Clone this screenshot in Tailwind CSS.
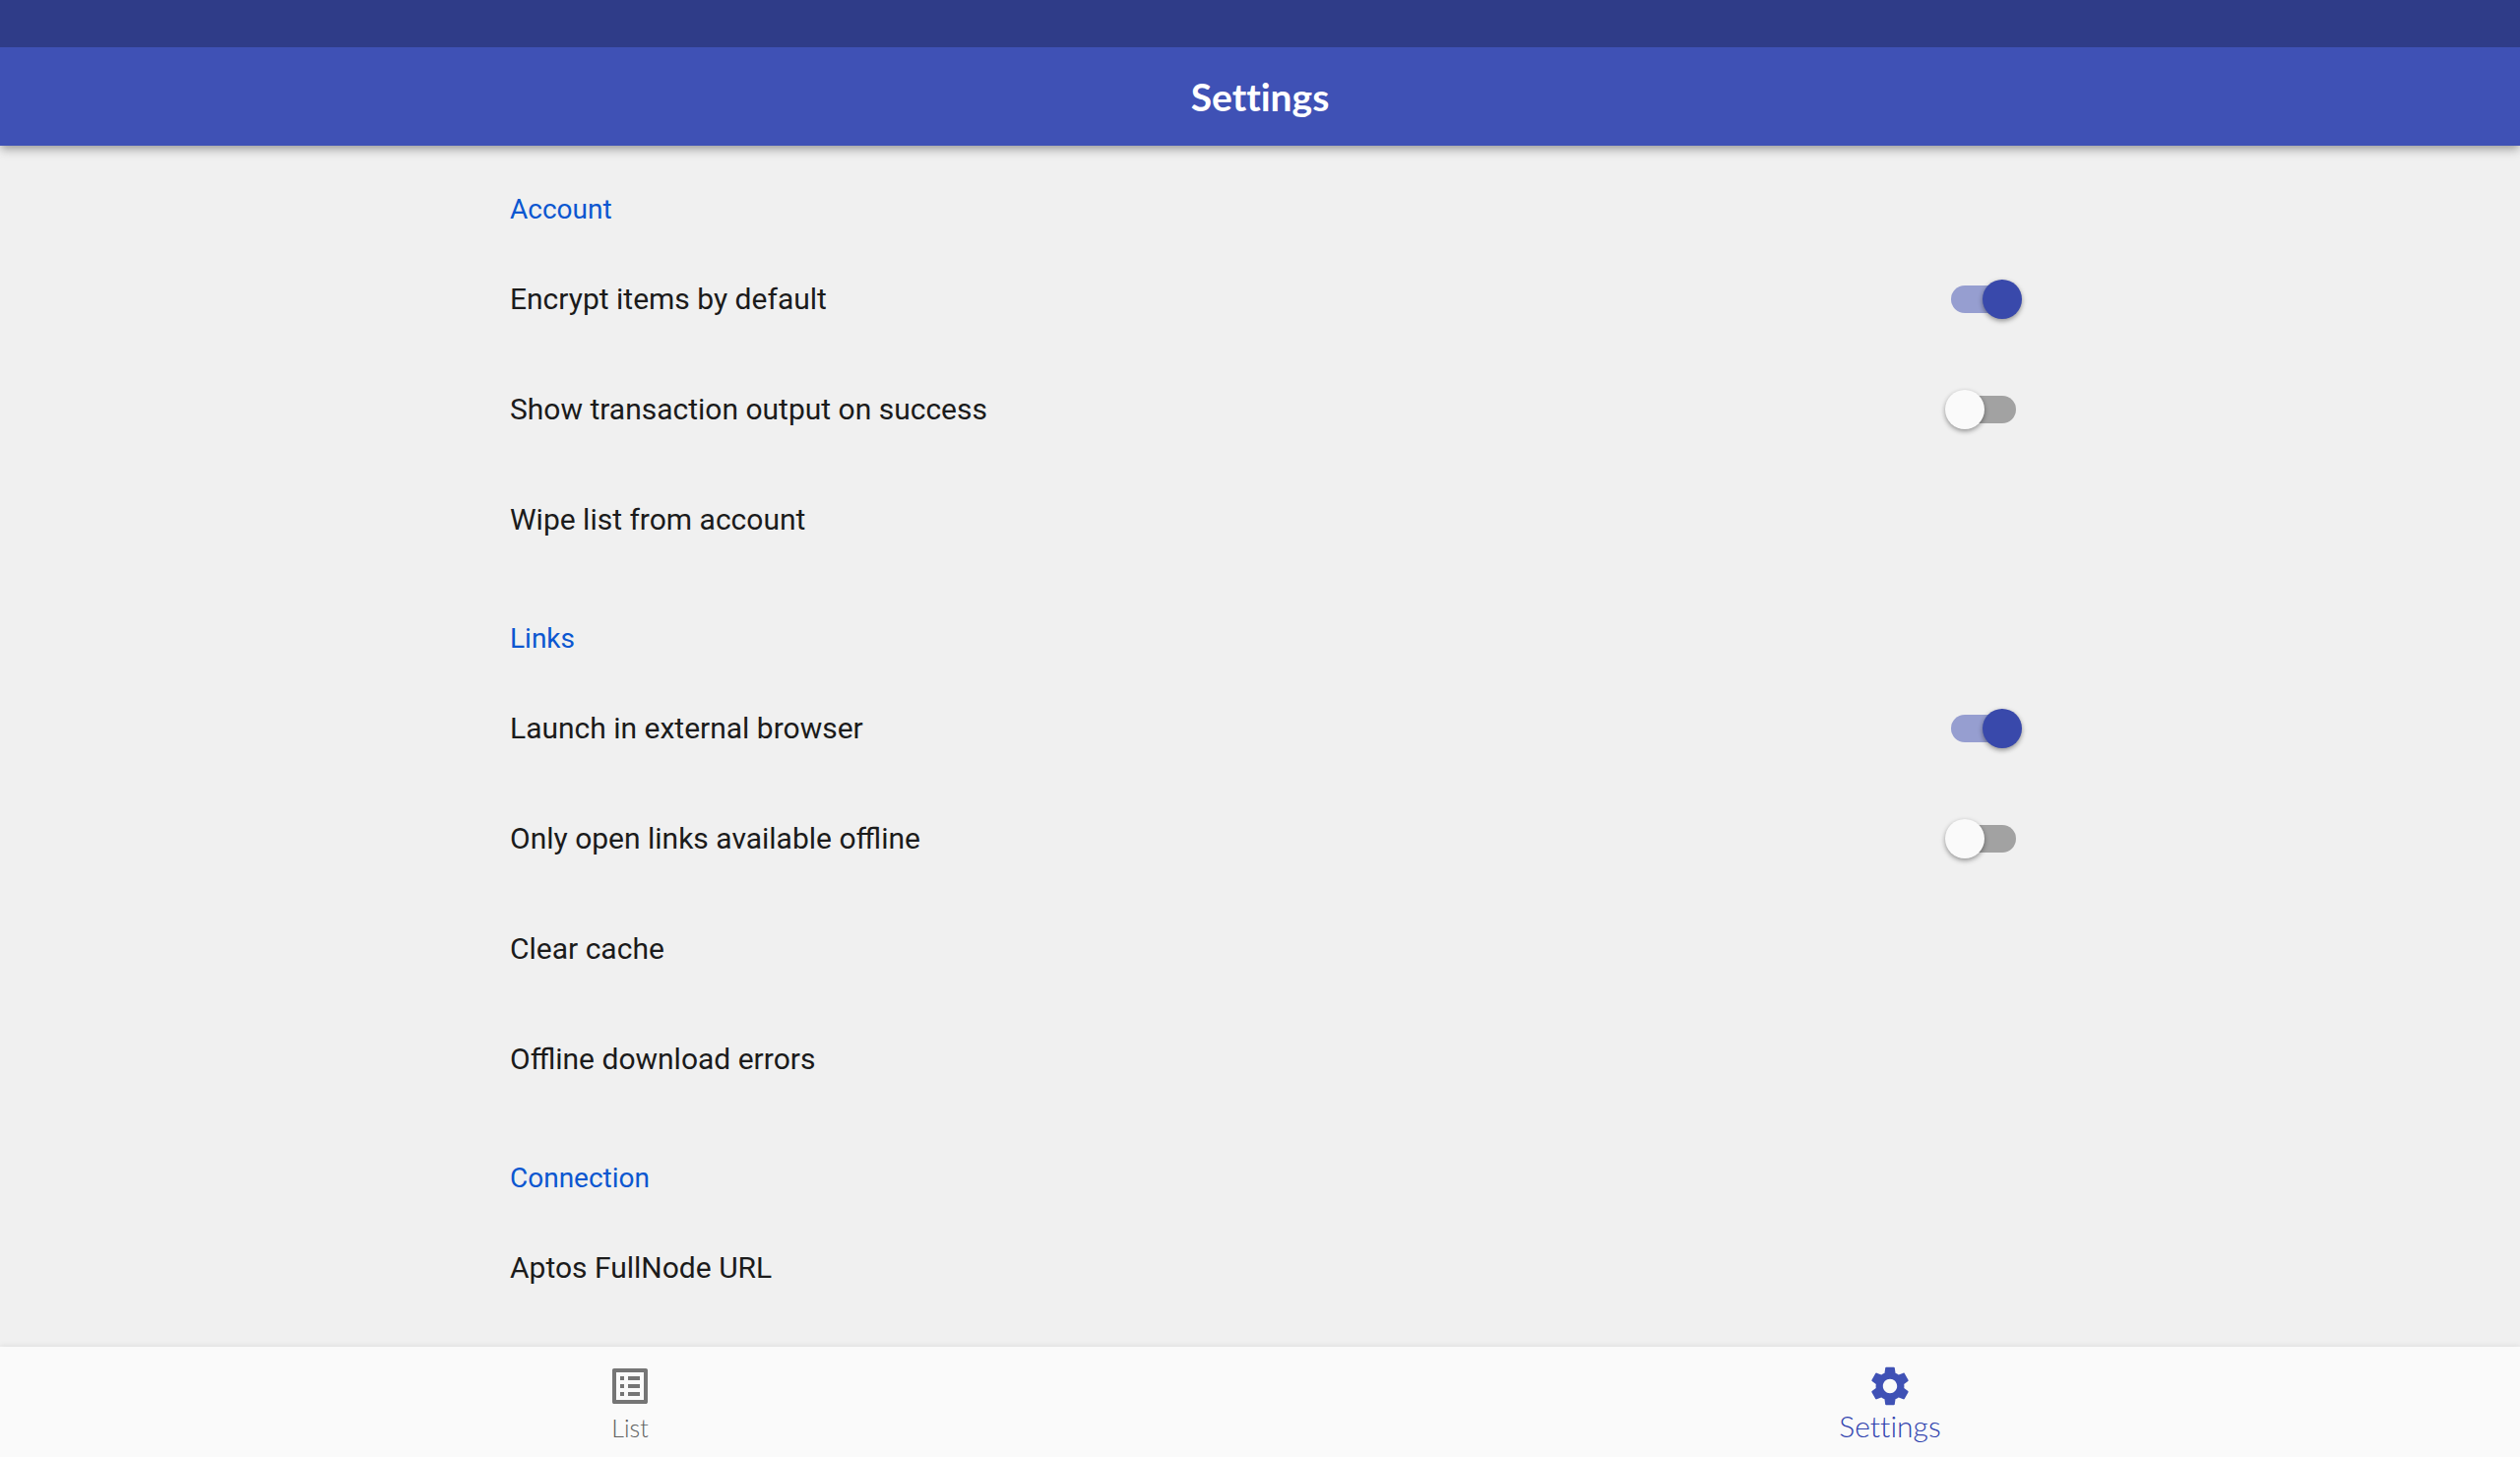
<!DOCTYPE html>
<html lang="en">
<head>
<meta charset="utf-8">
<meta name="viewport" content="width=device-width, initial-scale=1">
<title>Settings</title>
<script src="https://cdn.jsdelivr.net/npm/@tailwindcss/browser@4"></script>
</head>
<body class="flex min-h-screen flex-col bg-[#f0f0f0] font-['Roboto',sans-serif] text-[30px] leading-9 text-[#1b1b1b]">
  <header class="sticky top-0 z-10 bg-[#3f51b5] shadow-[0_4px_8px_-2px_rgba(0,0,0,0.2),0_6px_10px_0_rgba(0,0,0,0.14),0_0_8px_0_rgba(0,0,0,0.1)]">
    <div class="h-12 bg-[#2f3c88]"></div>
    <div class="flex h-25 items-center justify-center">
      <h1 class="font-['Lato',sans-serif] text-[39px] leading-12 font-bold text-white [font-variant-ligatures:none]">Settings</h1>
    </div>
  </header>

  <main class="mx-auto w-3/5 grow pl-1.5">
    <section>
      <h2 class="pt-[49px] pb-[19px] text-[28px] leading-8 text-[#0b57d0]">Account</h2>
      <label class="flex h-28 items-center justify-between">
        Encrypt items by default
        <input type="checkbox" role="switch" checked class="relative h-7 w-[66px] appearance-none rounded-full bg-[#a2a2a2] before:absolute before:-top-1.5 before:-left-1.5 before:size-10 before:rounded-full before:bg-[#fafafa] before:shadow-[0_2px_5px_rgba(0,0,0,0.4)] checked:bg-[#969ed0] checked:before:left-8 checked:before:bg-[#3949ab]">
      </label>
      <label class="flex h-28 items-center justify-between">
        Show transaction output on success
        <input type="checkbox" role="switch" class="relative h-7 w-[66px] appearance-none rounded-full bg-[#a2a2a2] before:absolute before:-top-1.5 before:-left-1.5 before:size-10 before:rounded-full before:bg-[#fafafa] before:shadow-[0_2px_5px_rgba(0,0,0,0.4)] checked:bg-[#969ed0] checked:before:left-8 checked:before:bg-[#3949ab]">
      </label>
      <button type="button" class="flex h-28 w-full items-center text-left">Wipe list from account</button>
    </section>

    <section>
      <h2 class="pt-[49px] pb-[19px] text-[28px] leading-8 text-[#0b57d0]">Links</h2>
      <label class="flex h-28 items-center justify-between">
        Launch in external browser
        <input type="checkbox" role="switch" checked class="relative h-7 w-[66px] appearance-none rounded-full bg-[#a2a2a2] before:absolute before:-top-1.5 before:-left-1.5 before:size-10 before:rounded-full before:bg-[#fafafa] before:shadow-[0_2px_5px_rgba(0,0,0,0.4)] checked:bg-[#969ed0] checked:before:left-8 checked:before:bg-[#3949ab]">
      </label>
      <label class="flex h-28 items-center justify-between">
        Only open links available offline
        <input type="checkbox" role="switch" class="relative h-7 w-[66px] appearance-none rounded-full bg-[#a2a2a2] before:absolute before:-top-1.5 before:-left-1.5 before:size-10 before:rounded-full before:bg-[#fafafa] before:shadow-[0_2px_5px_rgba(0,0,0,0.4)] checked:bg-[#969ed0] checked:before:left-8 checked:before:bg-[#3949ab]">
      </label>
      <button type="button" class="flex h-28 w-full items-center text-left">Clear cache</button>
      <button type="button" class="flex h-28 w-full items-center text-left">Offline download errors</button>
    </section>

    <section>
      <h2 class="pt-[49px] pb-[19px] text-[28px] leading-8 text-[#0b57d0]">Connection</h2>
      <button type="button" class="flex h-28 w-full items-center text-left">Aptos FullNode URL</button>
    </section>
  </main>

  <nav class="sticky bottom-0 z-10 grid h-28 grid-cols-2 bg-[#fafafa] font-['Lato',sans-serif] font-light shadow-[0_-1px_6px_rgba(0,0,0,0.08)] [font-variant-ligatures:none]">
    <a href="#list" class="flex flex-col items-center pt-4 text-[25px] leading-9 text-[#606060]">
      <svg class="size-12" viewBox="0 0 24 24" fill="#757575" aria-hidden="true"><path d="M19 5v14H5V5h14m1.1-2H3.9c-.5 0-.9.4-.9.9v16.200c0 .4.4.9.9.9h16.200c.4 0 .9-.5.9-.9V3.900c0-.5-.5-.9-.9-.9zM11 7h6v2h-6V7zm0 4h6v2h-6v-2zm0 4h6v2h-6v-2zM7 7h2v2H7V7zm0 4h2v2H7v-2zm0 4h2v2H7v-2z"/></svg>
      List
    </a>
    <a href="#settings" aria-current="page" class="flex flex-col items-center pt-4 text-[30px] leading-8 text-[#3042ae]">
      <svg class="size-12" viewBox="0 0 24 24" fill="#3f51b5" aria-hidden="true"><path d="M19.140 12.940c.040-.3.060-.610.060-.940 0-.320-.020-.640-.070-.940l2.030-1.580c.180-.140.230-.410.120-.610l-1.920-3.320c-.120-.220-.370-.290-.590-.220l-2.390.960c-.5-.380-1.030-.7-1.620-.940l-.360-2.540c-.040-.240-.240-.410-.480-.410h-3.840c-.240 0-.430.170-.470.410l-.360 2.540c-.590.240-1.130.570-1.620.940l-2.390-.960c-.220-.080-.470 0-.590.220L2.740 8.870c-.120.210-.080.470.120.610l2.030 1.580c-.050.3-.090.630-.090.940s.020.640.070.940l-2.030 1.580c-.180.140-.230.410-.120.610l1.920 3.320c.120.220.370.290.590.220l2.390-.960c.5.380 1.030.7 1.620.940l.360 2.540c.050.240.240.410.480.410h3.840c.240 0 .440-.170.470-.410l.360-2.540c.590-.240 1.130-.560 1.620-.940l2.390.960c.220.080.470 0 .590-.220l1.920-3.320c.120-.220.070-.470-.120-.610l-2.010-1.580zM12 15.600c-1.980 0-3.600-1.620-3.600-3.600s1.620-3.600 3.600-3.600 3.600 1.620 3.600 3.600-1.620 3.600-3.600 3.600z"/></svg>
      Settings
    </a>
  </nav>
</body>
</html>
